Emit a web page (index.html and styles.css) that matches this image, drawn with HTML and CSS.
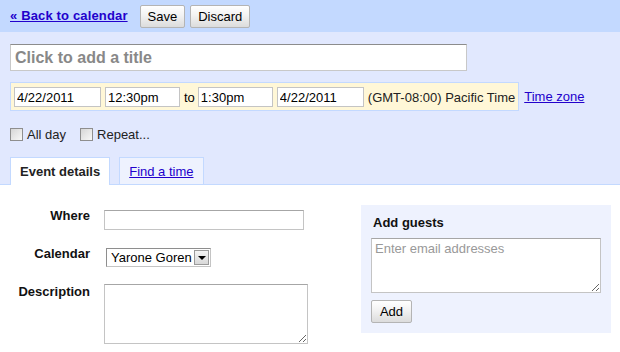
FILE: index.html
```html
<!DOCTYPE html>
<html>
  <head>
    <meta charset="utf-8" />
    <title>Edit event</title>
    <link rel="stylesheet" href="styles.css">
  </head>
  <body>
    <header class="topbar">
      <a class="back-link" href="#">&laquo; Back to calendar</a>
      <div class="actions">
        <button class="btn">Save</button>
        <button class="btn">Discard</button>
      </div>
    </header>

    <section class="editor">
      <input class="title-input" type="text" placeholder="Click to add a title" />

      <div class="when-row">
        <div class="when">
          <input class="field date" type="text" value="4/22/2011" />
          <input class="field time" type="text" value="12:30pm" />
          <span class="to">to</span>
          <input class="field time" type="text" value="1:30pm" />
          <input class="field date" type="text" value="4/22/2011" />
          <span class="tz">(GMT-08:00) Pacific Time</span>
        </div>
        <a class="tz-link" href="#">Time zone</a>
      </div>

      <div class="options">
        <label class="check"><input type="checkbox" /> All day</label>
        <label class="check"><input type="checkbox" /> Repeat...</label>
      </div>

      <nav class="tabs">
        <span class="tab active">Event details</span>
        <span class="tab"><a href="#">Find a time</a></span>
      </nav>
    </section>

    <section class="details">
      <div class="form">
        <label class="form-label">Where</label>
        <input class="field where" type="text" />

        <label class="form-label">Calendar</label>
        <span class="select">
          <select>
            <option>Yarone Goren</option>
          </select>
          <span class="select-arrow"></span>
        </span>

        <label class="form-label desc-label">Description</label>
        <textarea class="field desc"></textarea>
      </div>

      <aside class="guests">
        <h3>Add guests</h3>
        <textarea class="field guest-list" placeholder="Enter email addresses"></textarea>
        <button class="btn add-btn">Add</button>
      </aside>
    </section>
  </body>
</html>
```

FILE: styles.css
```css
:root {
  --bar: #c3d9ff;
  --panel: #e1e8fe;
  --light: #eef2fe;
  --link: #2200cc;
}
html,
body {
  margin: 0;
  font-family: "Liberation Sans", Arial, sans-serif;
  font-size: 13px;
  color: #000;
  background: #fff;
}
*,
*:before,
*:after {
  box-sizing: border-box;
}
a {
  color: var(--link);
}

/* top bar */
.topbar {
  height: 32px;
  background: var(--bar);
  display: flex;
  align-items: center;
  gap: 12px;
  padding: 0 10px;
}
.back-link {
  font-weight: bold;
  margin-top: -1px;
  letter-spacing: 0.15px;
}
.actions {
  display: flex;
  gap: 5px;
}
.btn {
  font-family: inherit;
  font-size: 13px;
  color: #000;
  height: 23px;
  padding: 0 7px;
  border: 1px solid #b4b4b4;
  border-radius: 2px;
  background: linear-gradient(#fff, #f2f2f2 45%, #dcdcdc);
}

/* blue editing area */
.editor {
  background: var(--panel);
  padding: 12px 0 0;
}
.field {
  font-family: inherit;
  font-size: 13px;
  color: #000;
  border: 1px solid #c4c4c4;
  border-top-color: #a6a6a6;
  background: #fff;
  outline: none;
}
.title-input {
  display: block;
  margin-left: 10px;
  width: 457px;
  height: 27px;
  padding: 0 4px;
  font-family: inherit;
  font-size: 16px;
  font-weight: bold;
  border: 1px solid #c8c8c8;
  border-top-color: #8c8c8c;
  outline: none;
}
.title-input::placeholder {
  color: #888;
}
.when-row {
  display: flex;
  align-items: center;
  gap: 5px;
  margin: 11px 0 0 10px;
}
.when {
  display: flex;
  align-items: center;
  gap: 4px;
  padding: 4px 3px 3px 3px;
  background: #fff7d7;
  border: 1px solid #c3d9ff;
}
.when .field {
  height: 20px;
  padding: 0 2px;
  border-color: #c4c4c4;
}
.date {
  width: 87px;
}
.time {
  width: 75px;
}
.to {
  margin-right: -1px;
}
.tz {
  color: #222;
}
.options {
  display: flex;
  gap: 14px;
  margin: 15px 0 0 10px;
  height: 16px;
  align-items: center;
}
.check {
  display: flex;
  align-items: center;
  gap: 4px;
  color: #222;
}
.check input {
  appearance: none;
  margin: 0;
  width: 13px;
  height: 13px;
  border: 1px solid #8e8e8e;
  background: linear-gradient(135deg, #d6d6d6, #f8f8f8);
}
.tabs {
  display: flex;
  gap: 9px;
  margin-top: 15px;
  padding-left: 10px;
  border-bottom: 1px solid #c3d9ff;
}
.tab {
  height: 27px;
  padding: 0 9px;
  display: flex;
  align-items: center;
  border: 1px solid #c3d9ff;
  border-bottom: 0;
  background: var(--light);
}
.tab.active {
  background: #fff;
  font-weight: bold;
  color: #222;
  height: 28px;
  margin-bottom: -1px;
  padding-bottom: 1px;
}

/* white details area */
.details {
  display: flex;
  align-items: flex-start;
  padding: 20px 9px 0 10px;
}
.form {
  flex: 1;
  margin-top: 5px;
  display: grid;
  grid-template-columns: 80px auto;
  column-gap: 14px;
  row-gap: 18px;
  align-items: start;
  justify-items: start;
}
.form-label {
  justify-self: end;
  font-weight: bold;
  color: #111;
  line-height: 14px;
  margin-top: -1px;
}
.desc-label {
  margin-top: 0;
}
.where {
  width: 200px;
  height: 20px;
}
.select {
  margin-left: 2px;
  width: 105px;
  height: 19px;
  display: flex;
  align-items: center;
  border: 1px solid #c4c4c4;
  border-top-color: #8e8e8e;
  border-left-color: #8e8e8e;
  background: #fff;
}
.select select {
  appearance: none;
  flex: 1;
  min-width: 0;
  border: 0;
  background: transparent;
  font-family: inherit;
  font-size: 13px;
  padding: 0 0 0 4px;
  outline: none;
}
.select-arrow {
  width: 15px;
  height: 15px;
  margin-right: 1px;
  border: 1px solid #9a9a9a;
  background: linear-gradient(#f4f4f4, #d8d8d8);
  display: flex;
  align-items: center;
  justify-content: center;
}
.select-arrow:after {
  content: "";
  border-left: 4px solid transparent;
  border-right: 4px solid transparent;
  border-top: 4px solid #000;
}
.desc {
  margin-top: -1px;
  width: 204px;
  height: 60px;
  resize: both;
}
.guests {
  width: 250px;
  background: var(--light);
  padding: 10px;
}
.guests h3 {
  margin: 0 0 7px 2px;
  font-size: 13px;
  line-height: 16px;
  color: #111;
}
.guest-list {
  display: block;
  width: 230px;
  height: 55px;
  padding: 2px 3px;
}
.guest-list::placeholder {
  color: #999;
}
.add-btn {
  margin-top: 7px;
  width: 41px;
  padding: 0;
}
```
